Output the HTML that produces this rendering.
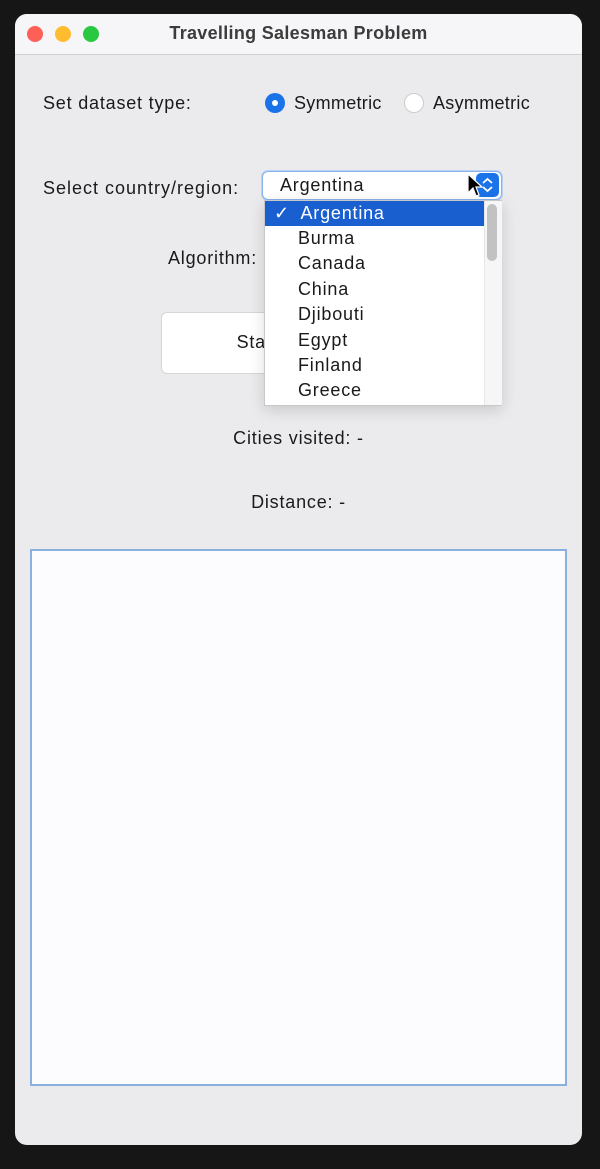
<!DOCTYPE html>
<html><head><style>
body{margin:0;width:600px;height:1169px;background:#161616;position:relative;overflow:hidden;font-family:"Liberation Sans",sans-serif;color:#1a1a1a}
.win{position:absolute;left:15px;top:14px;width:567px;height:1131px;background:#ebeaec;border-radius:12px;overflow:hidden}
.tb{position:absolute;left:0;top:0;width:567px;height:40px;background:#f6f5f7;border-bottom:1px solid #d0d0d0}
.dot{position:absolute;top:12px;width:16px;height:16px;border-radius:50%}
.t{position:absolute;font-size:18px;letter-spacing:.8px;white-space:nowrap}
.abs{position:absolute}
</style></head><body>
<div class="win">
 <div class="tb">
  <div class="dot" style="left:12px;background:#fe5f57"></div>
  <div class="dot" style="left:40px;background:#febc2e"></div>
  <div class="dot" style="left:68px;background:#28c840"></div>
  <div class="t" style="left:0;width:567px;text-align:center;top:9px;font-weight:bold;color:#3c3c3c;letter-spacing:.3px">Travelling Salesman Problem</div>
 </div>
 <div class="t" style="left:28px;top:79px">Set dataset type:</div>
 <div class="abs" style="left:250px;top:79px;width:20px;height:20px;border-radius:50%;background:#1a73e8"><div class="abs" style="left:7px;top:7px;width:6px;height:6px;border-radius:50%;background:#fff"></div></div>
 <div class="t" style="left:279px;top:79px;letter-spacing:.3px">Symmetric</div>
 <div class="abs" style="left:389px;top:79px;width:18px;height:18px;border-radius:50%;background:#fff;border:1px solid #ccc"></div>
 <div class="t" style="left:418px;top:79px;letter-spacing:.3px">Asymmetric</div>
 <div class="t" style="left:28px;top:164px;letter-spacing:1px">Select country/region:</div>
 <div class="abs" style="left:247px;top:157px;width:238px;height:27px;background:#fff;border:1px solid #8ab3ec;border-radius:6px;box-shadow:0 0 0 1px #b9d2f5"></div>
 <div class="t" style="left:265px;top:161px">Argentina</div>
 <div class="abs" style="left:461px;top:159px;width:23px;height:24px;background:#1a73e8;border-radius:5px"><svg width="23" height="24"><path d="M7 10 L11.5 6 L16 10 M7 14 L11.5 18 L16 14" stroke="#fff" stroke-width="1.8" fill="none"/></svg></div>
 <div class="t" style="left:153px;top:234px">Algorithm: <span style="color:#e0e0e3">Nearest Neighbor</span></div>
 <div class="abs" style="left:146px;top:298px;width:284px;height:60px;background:#fff;border:1px solid #d6d6d6;border-radius:6px"></div>
 <div class="t" style="left:146px;top:318px;width:284px;text-align:center">Start <span style="color:#e0e0e0">Travelling</span></div>
 <div class="t" style="left:0;width:567px;text-align:center;top:414px">Cities visited: -</div>
 <div class="t" style="left:0;width:567px;text-align:center;top:478px">Distance: -</div>
 <div class="abs" style="left:15px;top:535px;width:533px;height:533px;background:#fcfbfe;border:2px solid #8ab0e0"></div>
 <div class="abs" style="left:249px;top:186px;width:236px;height:204px;background:#fff;border:1px solid #c8c8c8;box-shadow:0 4px 14px rgba(0,0,0,.15);font-size:18px;letter-spacing:.8px">
  <div style="height:25px;width:210px;background:#1a5fd0;color:#fff;line-height:25px;padding-left:9px">✓&nbsp; Argentina</div>
  <div style="padding-left:33px;line-height:25.4px">Burma<br>Canada<br>China<br>Djibouti<br>Egypt<br>Finland<br>Greece</div>
  <div class="abs" style="left:219px;top:0;width:17px;height:204px;background:#f6f6f6;border-left:1px solid #e6e6e6"></div>
  <div class="abs" style="left:222px;top:3px;width:10px;height:57px;border-radius:5px;background:#c2c2c2"></div>
 </div>
</div>
<svg class="abs" style="left:466px;top:173px" width="18" height="26" viewBox="0 0 18 26"><path d="M2 1 L2 20 L7 15 L10 23 L13 22 L10 14 L16 14 Z" fill="#000" stroke="#fff" stroke-width="1.2"/></svg>
</body></html>
